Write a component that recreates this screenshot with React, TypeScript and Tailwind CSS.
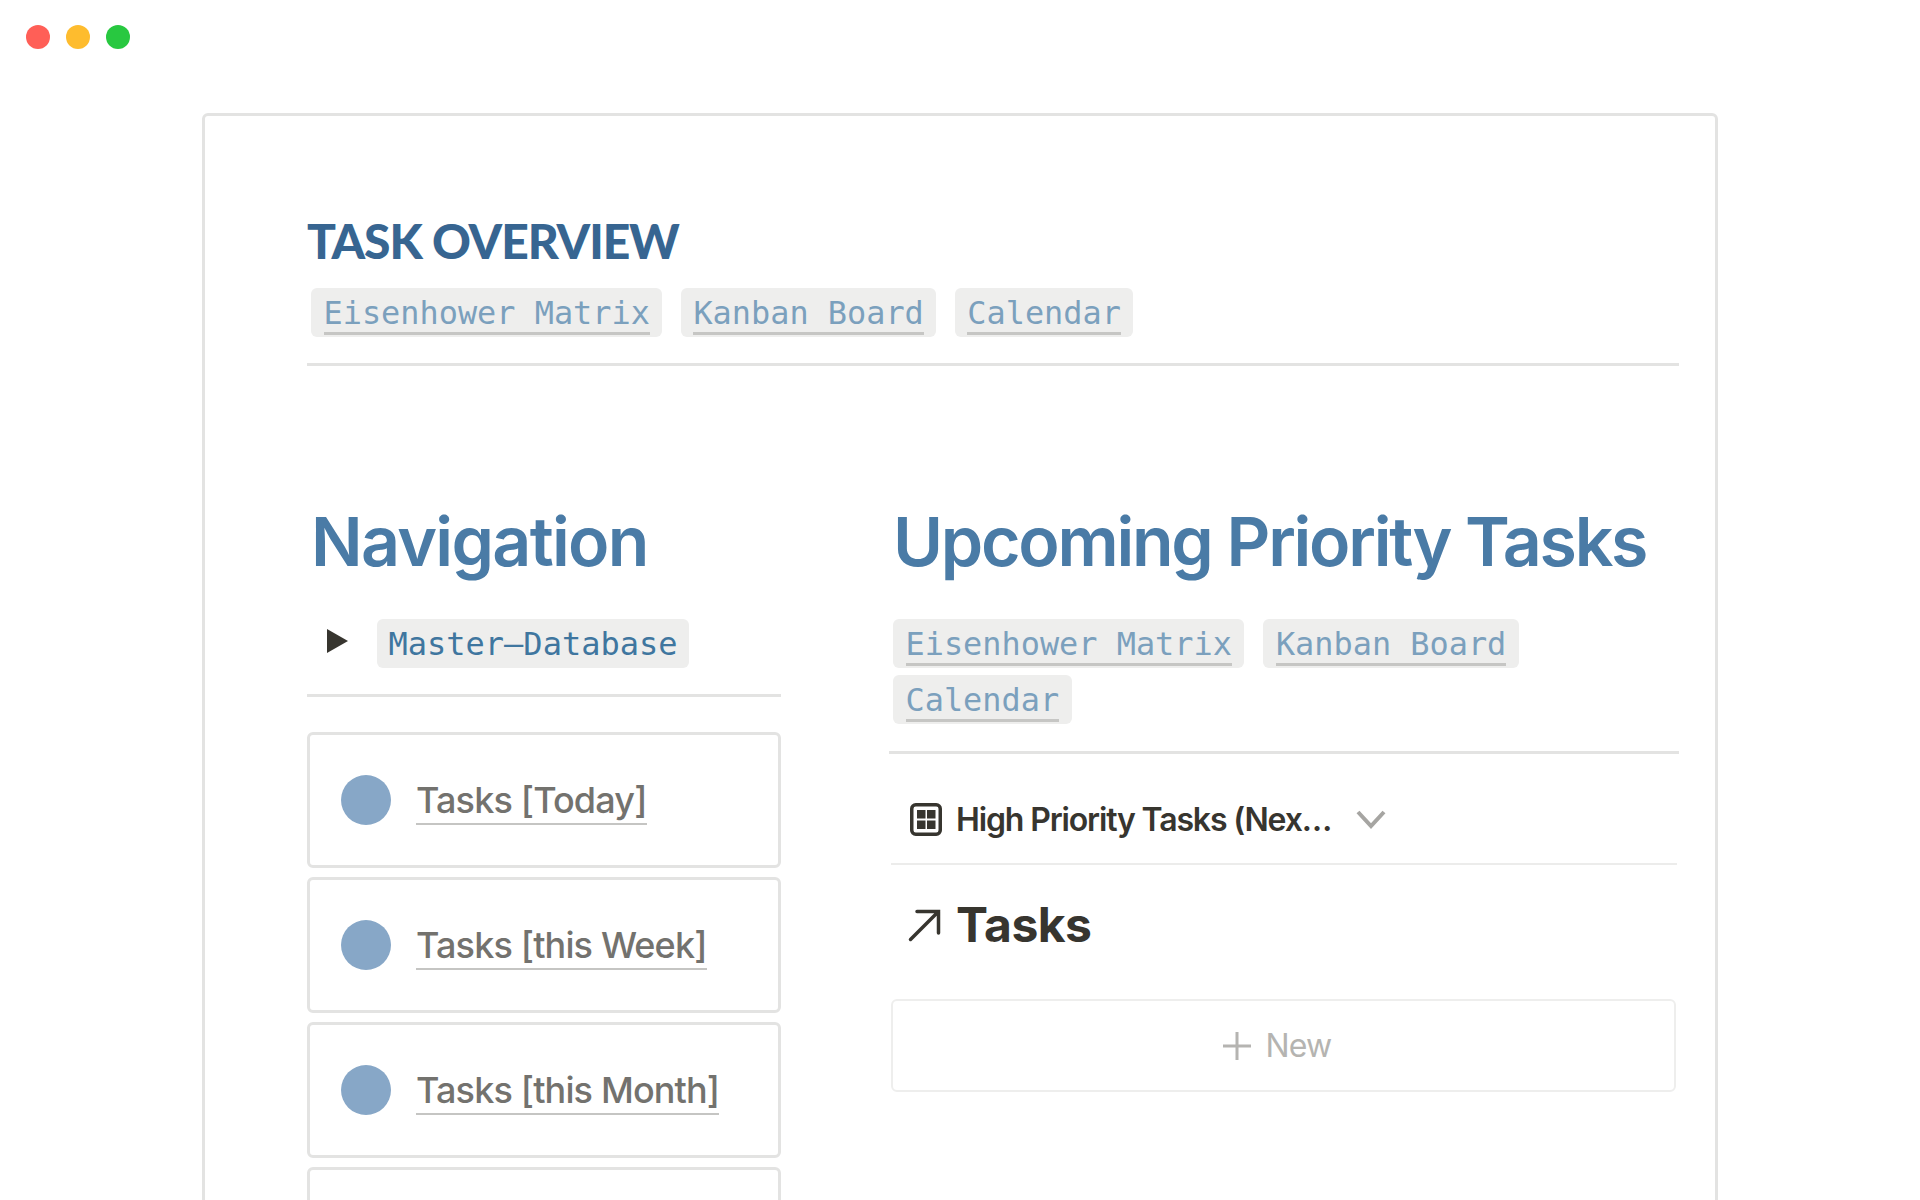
import React from 'react';

const inter = { fontFamily: 'Inter, sans-serif' };

const Chip: React.FC<{ label: string }> = ({ label }) => (
  <a className="flex h-[49px] items-center rounded-md bg-[#eeeeed] px-[12.5px] font-['DejaVu_Sans_Mono',monospace] text-[31.9px] text-[#7ba0bd]">
    <span className="block h-[44px] border-b-[3px] border-[#c6c6c4] leading-[44px]">{label}</span>
  </a>
);

const NavCard: React.FC<{ label?: string }> = ({ label }) => (
  <div className="flex h-[136px] shrink-0 items-center rounded-md border-[3px] border-[#e3e3e2] pl-[31px]">
    <div className="h-[50px] w-[50px] rounded-full bg-[#87a7c7]" />
    {label && (
      <span className="ml-[25px] mt-[2px] border-b-2 border-[#c5c5c3] text-[36px] font-[450] leading-[46px] tracking-[-0.85px] text-[#73726e]">{label}</span>
    )}
  </div>
);

export default function App() {
  return (
    <div className="h-[1200px] overflow-hidden bg-white font-['Inter',sans-serif]" style={inter}>
      <div className="flex h-[75px] items-start gap-4 pl-[26px] pt-[25px]">
        <div className="h-6 w-6 rounded-full bg-[#ff5f57]" />
        <div className="h-6 w-6 rounded-full bg-[#febc2e]" />
        <div className="h-6 w-6 rounded-full bg-[#28c840]" />
      </div>

      <div className="mx-0 mt-[38px] ml-[202px] box-border h-[1200px] w-[1516px] rounded-md border-[3px] border-[#e3e3e2] pl-[102px] pr-[36px] pt-[95px]">
        <h1 className="font-['Lato',sans-serif] text-[48px] font-black leading-[60px] tracking-[-1.1px] text-[#376591]">TASK OVERVIEW</h1>
        <div className="mt-[17px] flex gap-[18.5px] pl-1">
          <Chip label="Eisenhower Matrix" />
          <Chip label="Kanban Board" />
          <Chip label="Calendar" />
        </div>
        <div className="mt-[26px] h-[3px] bg-[#e3e3e2]" />

        <div className="mt-[131px] flex">
          <div className="flex w-[474px] shrink-0 flex-col">
            <h2 className="pl-1 text-[68px] font-semibold leading-[89px] tracking-[-1.7px] text-[#4a7ba6]">Navigation</h2>
            <div className="mt-[33px] flex items-center pl-[20px]">
              <svg width="21" height="24" viewBox="0 0 21 24" className="mt-[-6px]">
                <path d="M0 0 L21 12 L0 24 Z" fill="#37352f" />
              </svg>
              <a className="ml-[29px] flex h-[49px] items-center rounded-md bg-[#eeeeed] px-[11.5px] font-['DejaVu_Sans_Mono',monospace] text-[32px] text-[#3f769f]">
                Master—Database
              </a>
            </div>
            <div className="mt-[26px] h-[3px] bg-[#e3e3e2]" />
            <div className="mt-[35px] flex flex-col gap-[9px]">
              <NavCard label="Tasks [Today]" />
              <NavCard label="Tasks [this Week]" />
              <NavCard label="Tasks [this Month]" />
              <NavCard />
            </div>
          </div>

          <div className="ml-[108px] flex min-w-0 flex-1 flex-col">
            <h2 className="pl-1 whitespace-nowrap text-[68px] font-semibold leading-[89px] tracking-[-2.25px] text-[#4a7ba6]">Upcoming Priority Tasks</h2>
            <div className="mt-[33px] flex flex-wrap gap-x-[19px] gap-y-[7px] pl-1">
              <Chip label="Eisenhower Matrix" />
              <Chip label="Kanban Board" />
              <Chip label="Calendar" />
            </div>
            <div className="mt-[27px] h-[3px] bg-[#e3e3e2]" />

            <div className="mx-[2px] flex h-[111px] items-center border-b-2 border-[#ececeb] pl-[19px] pt-[22px]">
              <svg width="32" height="33" viewBox="0 0 32 33" fill="none">
                <rect x="1.75" y="1.75" width="28.5" height="29.5" rx="4" stroke="#37352f" strokeWidth="3.5" />
                <rect x="7" y="7" width="8.5" height="8.5" fill="#37352f" />
                <rect x="17" y="7" width="8.5" height="8.5" fill="#37352f" />
                <rect x="7" y="17.5" width="8.5" height="8.5" fill="#37352f" />
                <rect x="17" y="17.5" width="8.5" height="8.5" fill="#37352f" />
              </svg>
              <span className="ml-[14px] text-[32px] font-semibold tracking-[-1.15px] text-[#37352f]">High Priority Tasks (Nex…</span>
              <svg width="30" height="19" viewBox="0 0 30 19" fill="none" className="ml-[25px]">
                <path d="M2 2 L15 16 L28 2" stroke="#a6a5a2" strokeWidth="4" />
              </svg>
            </div>

            <div className="mt-[25px] flex items-center pl-[19px]">
              <svg width="33" height="33" viewBox="0 0 33 33" fill="none">
                <path d="M2.5 30.5 L30.5 2.5 M9 2.5 H30.5 V24" stroke="#37352f" strokeWidth="3.5" strokeLinecap="round" />
              </svg>
              <span className="ml-[15px] text-[48px] font-bold leading-[70px] tracking-[-0.5px] text-[#37352f]">Tasks</span>
            </div>

            <div className="ml-[2px] mr-[3px] mt-[39px] flex h-[93px] items-center justify-center rounded-md border-2 border-[#eeeeed] pr-[13px]">
              <svg width="28" height="28" viewBox="0 0 28 28" fill="none">
                <path d="M14 0 V28 M0 14 H28" stroke="#b5b4b1" strokeWidth="3" />
              </svg>
              <span className="ml-[15px] text-[32px] tracking-[-0.8px] text-[#b5b4b1]">New</span>
            </div>
          </div>
        </div>
      </div>
    </div>
  );
}
